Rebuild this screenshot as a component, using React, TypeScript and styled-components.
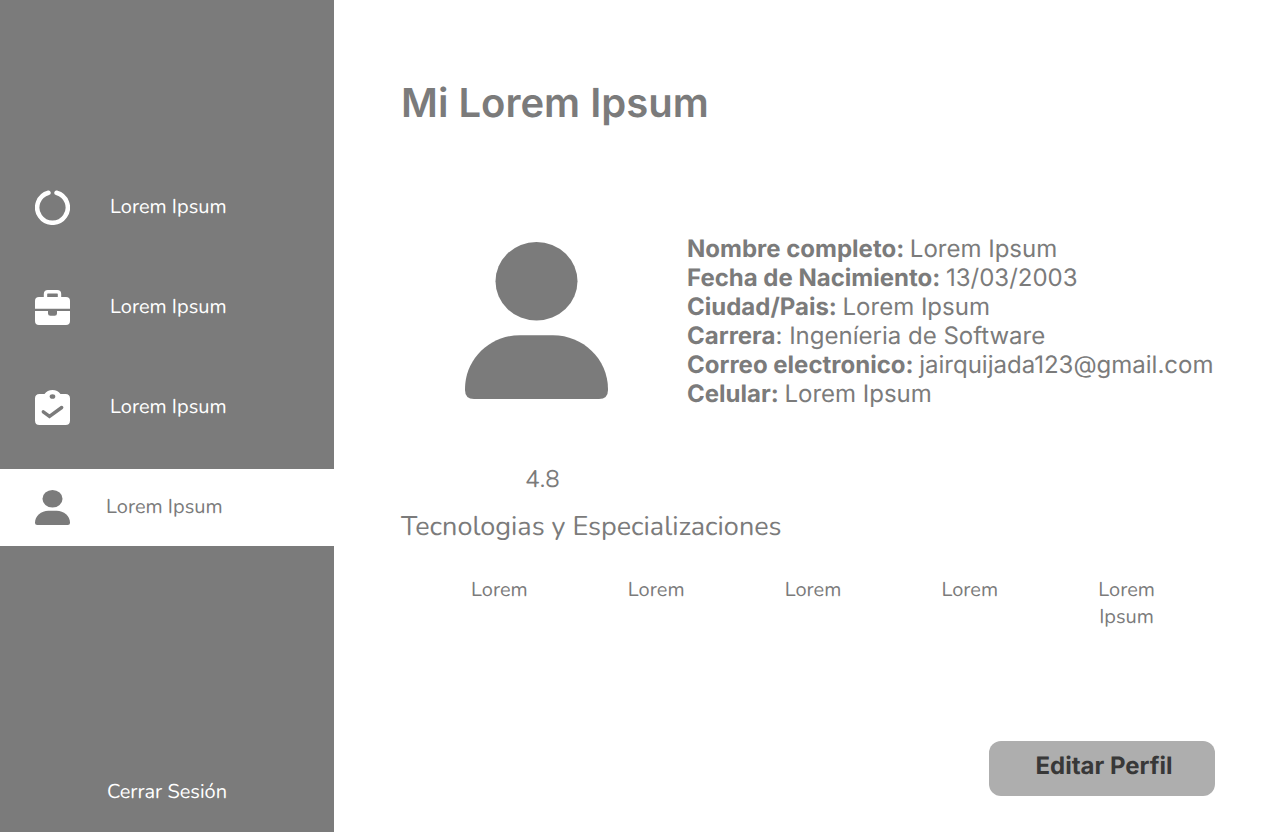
import React from "react";
import styled, { createGlobalStyle } from "styled-components";

const gray = "#7b7b7b";
const rounded = `Nunito, "Open Sans", "Noto Sans", sans-serif`;
const inter = `Inter, "Liberation Sans", sans-serif`;

const GlobalStyle = createGlobalStyle`
  *, *::before, *::after { box-sizing: border-box; }
  body {
    margin: 0;
    background: #fff;
    color: ${gray};
    font-family: ${rounded};
    text-rendering: geometricPrecision;
  }
  h1, h2, p, ul, dl, dd { margin: 0; padding: 0; }
`;

const Page = styled.div`
  display: flex;
  min-height: 100vh;
`;

const Sidebar = styled.aside`
  flex: 0 0 334px;
  display: flex;
  flex-direction: column;
  justify-content: space-between;
  padding: 169px 0 26px;
  background: ${gray};
`;

const Nav = styled.nav`
  display: flex;
  flex-direction: column;
  gap: 23px;
`;

const NavLink = styled.a<{ $active?: boolean }>`
  display: flex;
  align-items: center;
  gap: ${(p) => (p.$active ? 36 : 40)}px;
  height: 77px;
  padding: 0 35px;
  background: ${(p) => (p.$active ? "#fff" : "transparent")};
  color: ${(p) => (p.$active ? gray : "#fff")};
  font-size: 20px;
  font-weight: 400;
  line-height: 28px;
  text-decoration: none;
`;

const NavIcon = styled.svg`
  flex: none;
  width: 35px;
  height: 35px;
`;

const LogoutButton = styled.button`
  align-self: center;
  padding: 0;
  border: 0;
  background: none;
  color: #fff;
  font-family: ${rounded};
  font-size: 20px;
  font-weight: 400;
  line-height: 27px;
  text-rendering: inherit;
  cursor: pointer;
`;

const Main = styled.main`
  flex: 1;
  min-width: 0;
  display: flex;
  flex-direction: column;
  padding: 79px 65px 36px 67px;
`;

const Title = styled.h1`
  font-family: ${inter};
  font-size: 40px;
  font-weight: 600;
  line-height: 48px;
`;

const Profile = styled.section`
  display: flex;
  gap: 79px;
  margin-top: 107px;
  padding-left: 64px;
`;

const Portrait = styled.div`
  flex: none;
  display: flex;
  flex-direction: column;
  gap: 65px;
  padding-top: 8px;
`;

const Avatar = styled.svg`
  display: block;
  width: 143px;
  height: 157px;
`;

const Rating = styled.p`
  padding-left: 12px;
  text-align: center;
  font-size: 24px;
  font-weight: 400;
  line-height: 33px;
`;

const Details = styled.dl`
  min-width: 0;
  font-family: ${inter};
  font-size: 24px;
  font-weight: 400;
  line-height: 29px;
`;

const Detail = styled.div`
  dt, dd { display: inline; }
  dt { font-weight: 700; }
`;

const Regular = styled.span`
  font-weight: 400;
`;

const SectionTitle = styled.h2`
  margin-top: 11px;
  font-size: 27px;
  font-weight: 400;
  line-height: 38px;
`;

const Skills = styled.ul`
  display: grid;
  grid-template-columns: repeat(5, 1fr);
  margin-top: 31px;
  padding: 0 10px 0 20px;
  list-style: none;
  text-align: center;
  font-size: 20px;
  font-weight: 400;
  line-height: 27px;
`;

const Skill = styled.li`
  padding: 0 40px;
`;

const EditButton = styled.button`
  align-self: flex-end;
  width: 226px;
  height: 55px;
  margin-top: auto;
  padding: 0 0 6px 4px;
  border: 0;
  border-radius: 12px;
  background: #aeaeae;
  color: #383838;
  font-family: ${inter};
  font-size: 24px;
  font-weight: 700;
  line-height: 29px;
  text-rendering: inherit;
  cursor: pointer;
`;

const PersonShape = () => (
  <g fill={gray}>
    <ellipse cx="71.5" cy="39.3" rx="41" ry="39.3" />
    <path d="M55 93.2H88C118 93.2 143 117 143 147V148Q143 157 134 157H9Q0 157 0 148V147C0 117 25 93.2 55 93.2Z" />
  </g>
);

const icons = {
  ring: (
    <NavIcon viewBox="0 0 35 35" aria-hidden="true">
      <path d="M13.5 2.73A15.3 15.3 0 1 0 21.5 2.73" fill="none" stroke="#fff" strokeWidth="4.5" strokeLinecap="round" />
    </NavIcon>
  ),
  briefcase: (
    <NavIcon viewBox="0 0 35 35" aria-hidden="true">
      <path d="M10.5 8.5V4Q10.5 1.7 12.8 1.7H22.2Q24.5 1.7 24.5 4V8.5" fill="none" stroke="#fff" strokeWidth="3.4" />
      <path d="M4 7H31Q35 7 35 11V18.7H0V11Q0 7 4 7Z" fill="#fff" />
      <path d="M0 21H13V23.4Q13 25.8 15.4 25.8H19.6Q22 25.8 22 23.4V21H35V31Q35 35 31 35H4Q0 35 0 31Z" fill="#fff" />
    </NavIcon>
  ),
  clipboard: (
    <NavIcon viewBox="0 0 35 35" aria-hidden="true">
      <path d="M4.5 4H9.5C11.5 1.5 14 0 17.5 0S23.5 1.5 25.5 4H30.5Q35 4 35 8.5V30.5Q35 35 30.5 35H4.5Q0 35 0 30.5V8.5Q0 4 4.5 4Z" fill="#fff" />
      <ellipse cx="17.5" cy="6.5" rx="2.8" ry="2.3" fill={gray} />
      <path d="M8.3 21.8L14.5 26.3L26.7 17.5" fill="none" stroke={gray} strokeWidth="3.4" strokeLinecap="round" />
    </NavIcon>
  ),
  person: (
    <NavIcon viewBox="0 0 143 157" preserveAspectRatio="none" aria-hidden="true">
      <PersonShape />
    </NavIcon>
  ),
};

const navItems = [
  { id: "ring", icon: icons.ring },
  { id: "briefcase", icon: icons.briefcase },
  { id: "clipboard", icon: icons.clipboard },
  { id: "person", icon: icons.person, active: true },
];

const details = [
  { label: "Nombre completo:", value: "Lorem Ipsum" },
  { label: "Fecha de Nacimiento:", value: "13/03/2003" },
  { label: "Ciudad/Pais:", value: "Lorem Ipsum" },
  { label: "Carrera", suffix: ": ", value: "Ingeníeria de Software" },
  { label: "Correo electronico:", value: "jairquijada123@gmail.com" },
  { label: "Celular:", value: "Lorem Ipsum" },
];

const skills = ["Lorem", "Lorem", "Lorem", "Lorem", "Lorem Ipsum"];

export default function App() {
  return (
    <>
      <GlobalStyle />
      <Page>
        <Sidebar>
          <Nav>
            {navItems.map((item) => (
              <NavLink key={item.id} href="#" $active={item.active} aria-current={item.active ? "page" : undefined}>
                {item.icon}
                Lorem Ipsum
              </NavLink>
            ))}
          </Nav>
          <LogoutButton type="button">Cerrar Sesión</LogoutButton>
        </Sidebar>
        <Main>
          <Title>Mi Lorem Ipsum</Title>
          <Profile>
            <Portrait>
              <Avatar viewBox="0 0 143 157" aria-hidden="true">
                <PersonShape />
              </Avatar>
              <Rating>4.8</Rating>
            </Portrait>
            <Details>
              {details.map((d) => (
                <Detail key={d.label}>
                  <dt>
                    {d.label}
                    {d.suffix ? <Regular>{d.suffix}</Regular> : " "}
                  </dt>
                  <dd>{d.value}</dd>
                </Detail>
              ))}
            </Details>
          </Profile>
          <SectionTitle>Tecnologias y Especializaciones</SectionTitle>
          <Skills>
            {skills.map((skill, i) => (
              <Skill key={i}>{skill}</Skill>
            ))}
          </Skills>
          <EditButton type="button">Editar Perfil</EditButton>
        </Main>
      </Page>
    </>
  );
}
